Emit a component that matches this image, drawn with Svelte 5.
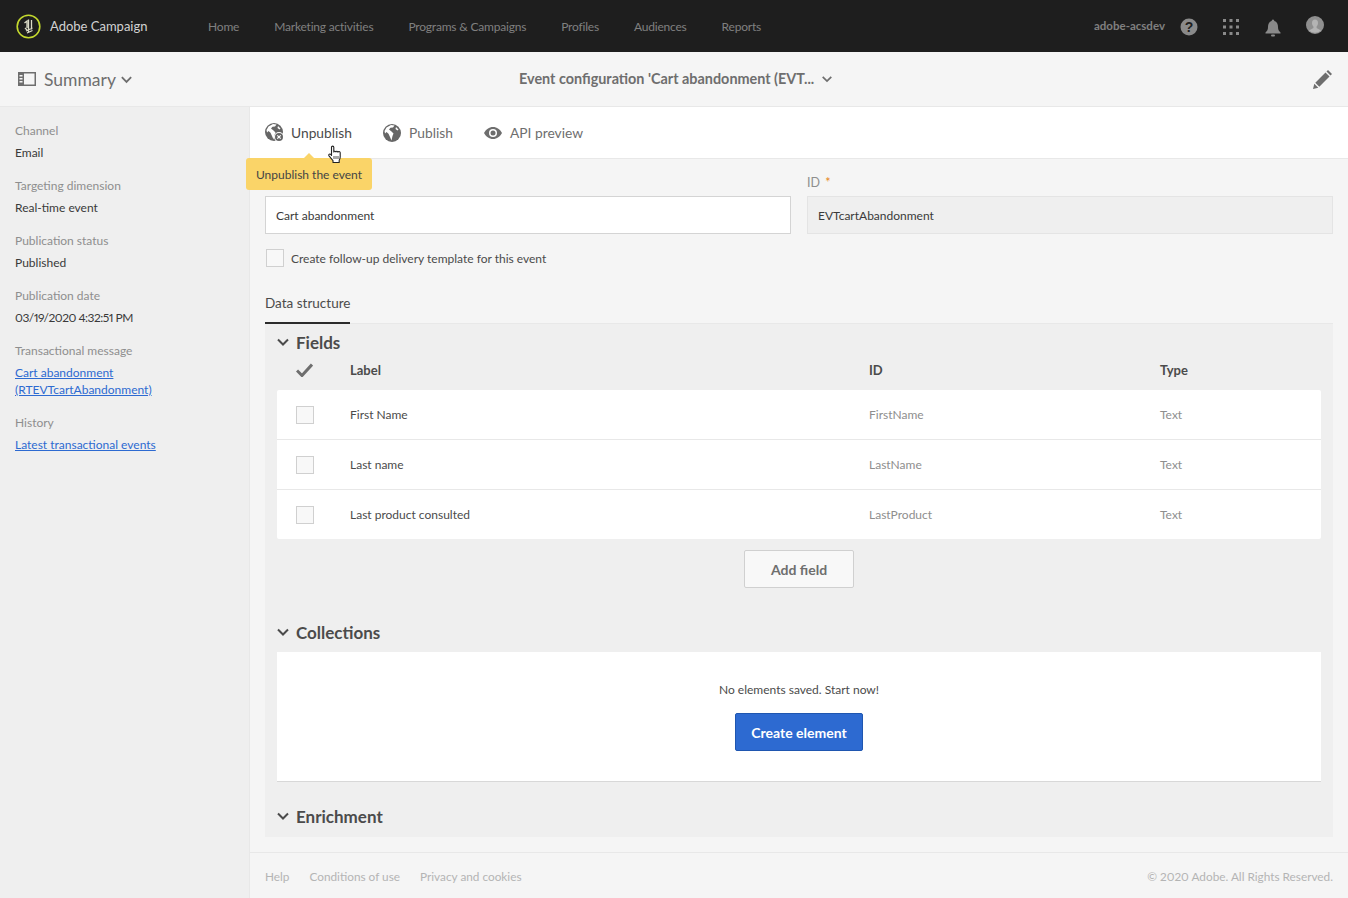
<script>
  const nav = ['Home', 'Marketing activities', 'Programs & Campaigns', 'Profiles', 'Audiences', 'Reports'];
  const meta = [
    { k: 'Channel', v: 'Email' },
    { k: 'Targeting dimension', v: 'Real-time event' },
    { k: 'Publication status', v: 'Published' },
    { k: 'Publication date', v: '03/19/2020 4:32:51 PM', num: true }
  ];
  const rows = [
    ['First Name', 'FirstName', 'Text'],
    ['Last name', 'LastName', 'Text'],
    ['Last product consulted', 'LastProduct', 'Text']
  ];
  const land = 'M8 1 11.500 1.500 10 3.500 7.500 3.800 6 5.500 8.500 7.500 10.500 9.500 9.500 12 8.500 16.500 7 13 5.500 9.800 3.500 8 2 9.500 1.500 7 3.500 3.500zM13 3 15.500 5.500 14.500 6.500 12.500 5z';
</script>

{#snippet chev(size = 14)}
  <svg width={size} height={size} viewBox="0 0 14 14" class="chev"><path d="M2 4.500 7 9.500 12 4.500" fill="none" stroke="currentColor" stroke-width="2"/></svg>
{/snippet}

{#snippet globe()}
  <svg width="18" height="18" viewBox="0 0 18 18"><circle cx="9" cy="9" r="9" fill="#666"/><path d={land} fill="#fff"/></svg>
{/snippet}

<div class="page">
  <header class="top">
    <div class="brand">
      <svg width="25" height="25" viewBox="0 0 25 25"><circle cx="12.500" cy="12.500" r="11.300" fill="none" stroke="#c4d92e" stroke-width="1.600"/><path d="M8.500 9 11 7v7M12.500 5.500v12.500M15.500 6v9.500M10 17l6.500-3M11 19l5.500-2.500M9 14l2 2" fill="none" stroke="#dcdcc8" stroke-width="1.300"/></svg>
      <span>Adobe Campaign</span>
    </div>
    <nav class="nav">
      {#each nav as n}<span>{n}</span>{/each}
    </nav>
    <div class="tools">
      <span class="user">adobe-acsdev</span>
      <svg class="t-help" width="18" height="18" viewBox="0 0 18 18"><circle cx="9" cy="9" r="8.500" fill="#8a8a8a"/><text x="9" y="14" text-anchor="middle" class="q">?</text></svg>
      <svg class="t-grid" width="16" height="16" viewBox="0 0 16 16" fill="#8a8a8a">
        {#each [0, 6.500, 13] as y}{#each [0, 6.500, 13] as x}<rect {x} {y} width="3" height="3"/>{/each}{/each}
      </svg>
      <svg class="t-bell" width="16" height="18" viewBox="0 0 16 18" fill="#8a8a8a"><path d="M8 .5c1 0 1.300.8 1.300 1.500C12 2.800 13 5 13 8c0 2.500.8 4 2.500 5.500v1H.5v-1C2.200 12 3 10.500 3 8c0-3 1-5.200 3.700-6C6.700 1.300 7 .5 8 .5z"/><rect x="6" y="15.500" width="4" height="2" rx="1"/></svg>
      <svg class="t-user" width="18" height="18" viewBox="0 0 18 18"><circle cx="9" cy="9" r="9" fill="#8f8f8f"/><path d="M9 3.500c2 0 3 1.500 3 3.500 0 1.500-.6 2.800-1.400 3.500v1.500L15 14.500A8.800 8.800 0 0 1 3 14.500l4.400-2.500V10.500C6.600 9.800 6 8.500 6 7c0-2 1-3.500 3-3.500z" fill="#b4b4b4"/></svg>
    </div>
  </header>

  <div class="sub">
    <div class="sum">
      <svg width="18" height="14" viewBox="0 0 18 14"><rect x=".75" y=".75" width="16.500" height="12.500" fill="none" stroke="#6e6e6e" stroke-width="1.500"/><rect y="0" width="6" height="14" fill="#6e6e6e"/><rect x="1.500" y="3" width="3" height="1.500" fill="#f5f5f5"/><rect x="1.500" y="6" width="3" height="1.500" fill="#f5f5f5"/><rect x="1.500" y="9" width="3" height="1.500" fill="#f5f5f5"/></svg>
      <span class="sumtxt">Summary</span>
      {@render chev(13)}
    </div>
    <div class="title"><span>Event configuration 'Cart abandonment (EVT...</span>{@render chev(12)}</div>
    <svg class="pencil" width="19" height="19" viewBox="0 0 19 19" fill="#6e6e6e"><path d="M0 19l1.300-5.300L5.300 17.700zM2.300 12.700 12.500 2.500l4 4L6.300 16.700zM13.500 1.500 15 0l4 4-1.500 1.500z"/></svg>
  </div>

  <div class="body">
    <aside class="side">
      {#each meta as m}
        <div class="item"><div class="k">{m.k}</div><div class="v" class:num={m.num}>{m.v}</div></div>
      {/each}
      <div class="item"><div class="k">Transactional message</div><div class="v link">Cart abandonment<br>(RTEVTcartAbandonment)</div></div>
      <div class="item"><div class="k">History</div><div class="v link">Latest transactional events</div></div>
    </aside>

    <main class="main">
      <div class="bar">
        <div class="act first">
          <svg width="19" height="19" viewBox="0 0 19 19"><circle cx="9" cy="9" r="9" fill="#666"/><path d={land} fill="#fff"/><circle cx="14" cy="14" r="5" fill="#fff"/><circle cx="14" cy="14" r="4" fill="#666"/><path d="M12.300 12.300 15.700 15.700M15.700 12.300 12.300 15.700" stroke="#fff" stroke-width="1.200"/></svg>
          <span>Unpublish</span>
        </div>
        <div class="act">{@render globe()}<span class="dim">Publish</span></div>
        <div class="act">
          <svg width="18" height="12" viewBox="0 0 18 12"><path d="M9 0c4 0 7 2.500 9 6-2 3.500-5 6-9 6S2 9.500 0 6c2-3.500 5-6 9-6z" fill="#6e6e6e"/><circle cx="9" cy="6" r="4" fill="#fff"/><circle cx="9" cy="6" r="2.500" fill="#6e6e6e"/></svg>
          <span class="dim">API preview</span>
        </div>
      </div>

      <div class="tip">Unpublish the event</div>
      <svg class="cursor" width="16" height="19" viewBox="0 0 16 19"><path d="M4.500 10.500V2.200c0-1.500 2.300-1.500 2.300 0v4.800c0-1 2-1 2.100 0 0-1 2-1 2.100.2.200-1 2-1 2.200.4v4.400c0 1.500-.5 2.500-1 3.300v2.200H6v-1.800L2 10.800c-1-1.500 1-2.500 2-1.200z" fill="#fff" stroke="#222" stroke-width="1.100" stroke-linejoin="round"/><path d="M7 11v3M9 11v3M11 11v3" stroke="#222" stroke-width=".8"/></svg>

      <div class="content">
        <div class="form">
          <div class="field">
            <div class="flabel" aria-hidden="true">&nbsp;</div>
            <div class="input">Cart abandonment</div>
          </div>
          <div class="field">
            <div class="flabel">ID <em>*</em></div>
            <div class="input ro">EVTcartAbandonment</div>
          </div>
        </div>

        <div class="chk"><span class="box"></span><span>Create follow-up delivery template for this event</span></div>

        <div class="tabs"><span class="tab">Data structure</span></div>

        <section class="panel">
          <h3 class="h first">{@render chev(14)}<span>Fields</span></h3>
          <div class="grid head">
            <span class="c0"><svg width="17" height="14" viewBox="0 0 17 14"><path d="M1 7.500 6 12.500 16 1.500" fill="none" stroke="#6e6e6e" stroke-width="3"/></svg></span>
            <span>Label</span><span>ID</span><span>Type</span>
          </div>
          <div class="table">
            {#each rows as r}
              <div class="grid row">
                <span class="c0"><span class="box"></span></span>
                <span class="lab">{r[0]}</span><span class="mut">{r[1]}</span><span class="mut">{r[2]}</span>
              </div>
            {/each}
          </div>
          <div class="addwrap"><button class="add">Add field</button></div>

          <h3 class="h">{@render chev(14)}<span>Collections</span></h3>
          <div class="empty">
            <p>No elements saved. Start now!</p>
            <button class="cta">Create element</button>
          </div>

          <h3 class="h last">{@render chev(14)}<span>Enrichment</span></h3>
        </section>
      </div>

      <footer class="foot">
        <span>Help</span><span>Conditions of use</span><span>Privacy and cookies</span>
        <span class="copy">© 2020 Adobe. All Rights Reserved.</span>
      </footer>
    </main>
  </div>
</div>

<style>
  :global(body) { margin: 0; background: #f5f5f5; }
  .page { width: 1348px; height: 898px; overflow: hidden; font-family: Lato, "Open Sans", sans-serif; font-size: 13px; color: #4b4b4b; display: flex; flex-direction: column; font-variant-numeric: proportional-nums; }
  .top { height: 52px; flex: none; background: #1e1e1e; display: flex; align-items: center; padding-left: 16px; box-sizing: border-box; }
  .brand { width: 192px; display: flex; align-items: center; gap: 9px; color: #d2d2d2; font-size: 13px; }
  .nav { display: flex; gap: 35px; color: #808080; font-size: 12px; letter-spacing: -.2px; }
  .tools { margin-left: auto; display: flex; align-items: center; position: relative; height: 52px; width: 254px; color: #808080; font-size: 11.500px; font-weight: 700; }
  .user { position: absolute; left: 0; top: 19px; }
  .tools svg { position: absolute; }
  .t-help { left: 86px; top: 18px; }
  .t-grid { left: 129px; top: 19px; }
  .t-bell { left: 171px; top: 19px; }
  .t-user { left: 212px; top: 16px; }
  .q { font: 700 14px "Liberation Sans", sans-serif; fill: #1e1e1e; }

  .sub { height: 55px; flex: none; box-sizing: border-box; border-bottom: 1px solid #e8e8e8; background: #f5f5f5; display: flex; align-items: center; position: relative; padding: 0 16px 0 18px; }
  .sum { display: flex; align-items: center; gap: 8px; color: #6e6e6e; font-size: 17.500px; }
  .sum .chev { margin-left: -4px; }
  .title { position: absolute; left: 519px; top: 18px; display: flex; align-items: center; gap: 7px; color: #6e6e6e; font-size: 14.400px; font-weight: 700; }
  .pencil { margin-left: auto; }

  .body { flex: 1; display: flex; min-height: 0; }
  .side { width: 250px; flex: none; box-sizing: border-box; background: #efefef; border-right: 1px solid #e8e8e8; padding: 15px 15px; display: flex; flex-direction: column; gap: 16px; }
  .k { color: #8e8e8e; font-size: 12px; line-height: 17px; margin-bottom: 5px; }
  .v { color: #3a3a3a; font-size: 12px; line-height: 17px; }
  .num { letter-spacing: -.5px; }
  .link { color: #2d6ad1; text-decoration: underline; }

  .main { flex: 1; position: relative; display: flex; flex-direction: column; min-width: 0; }
  .bar { height: 52px; flex: none; box-sizing: border-box; background: #fff; border-bottom: 1px solid #e8e8e8; display: flex; align-items: center; padding-left: 15px; gap: 31px; font-size: 13.800px; color: #4b4b4b; }
  .act { display: flex; align-items: center; gap: 8px; }
  .act.first { gap: 7px; }
  .dim { color: #6e6e6e; }
  .tip { position: absolute; left: -4px; top: 51px; width: 126px; height: 32px; box-sizing: border-box; background: #fad468; border-radius: 3px; color: #444; font-size: 12px; line-height: 33px; text-align: center; }
  .tip::before { content: ""; position: absolute; left: 57px; top: -5px; border: 6px solid transparent; border-top: 0; border-bottom: 6px solid #fad468; }
  .cursor { position: absolute; left: 77px; top: 38px; z-index: 2; }

  .content { flex: 1; padding: 15px 15px 0; box-sizing: border-box; }
  .form { display: flex; gap: 16px; }
  .field { flex: 1; min-width: 0; }
  .flabel { display: block; height: 18px; line-height: 18px; color: #8e8e8e; font-size: 12.500px; margin-bottom: 4px; }
  .flabel em { color: #e68619; font-style: normal; margin-left: 2px; }
  .input { height: 38px; box-sizing: border-box; border: 1px solid #d4d4d4; background: #fff; padding: 1px 10px 0; line-height: 36px; font-size: 12px; color: #3a3a3a; }
  .input.ro { background: #efefef; border-color: #e4e4e4; }
  .chk { display: flex; align-items: center; gap: 7px; margin: 15px 0 0 1px; font-size: 12px; color: #4b4b4b; }
  .box { display: inline-block; width: 18px; height: 18px; box-sizing: border-box; border: 1px solid #d0d0d0; background: #f8f8f8; }
  .tabs { margin-top: 23px; height: 34px; display: flex; box-sizing: border-box; }
  .tab { font-size: 13.500px; line-height: 26px; height: 34px; box-sizing: border-box; border-bottom: 2px solid #2c2c2c; color: #4b4b4b; position: relative; z-index: 1; }
  .panel { background: #efefef; border-top: 1px solid #e8e8e8; margin-top: -1px; height: 514px; box-sizing: border-box; padding: 0 12px; }
  .h { margin: 0 0 0 -1px; display: flex; align-items: center; gap: 6px; font-size: 17px; font-weight: 700; color: #4b4b4b; height: 22px; }
  .h.first { padding-top: 7px; }
  .h .chev { color: #4b4b4b; }
  .grid { display: grid; grid-template-columns: 73px 519px 291px 1fr; align-items: center; }
  .head { height: 32px; margin: 1px 0 4px; font-weight: 700; color: #4b4b4b; }
  .c0 { display: flex; padding-left: 19px; }
  .table { background: #fff; border-radius: 2px; }
  .row { height: 50px; box-sizing: border-box; border-bottom: 1px solid #e8e8e8; font-size: 12px; }
  .row:last-child { height: 49px; border-bottom: 0; }
  .lab { color: #4b4b4b; }
  .mut { color: #8e8e8e; }
  .addwrap { display: flex; justify-content: center; padding-top: 11px; height: 82px; box-sizing: border-box; }
  button { font-family: inherit; cursor: pointer; }
  .add { width: 110px; height: 38px; background: #f8f8f8; border: 1px solid #d0d0d0; border-radius: 2px; color: #6e6e6e; font-size: 14px; font-weight: 700; }
  .empty { background: #fff; height: 130px; margin-top: 9px; border-bottom: 1px solid #d8d8d8; display: flex; flex-direction: column; align-items: center; box-sizing: border-box; padding-top: 30px; }
  .empty p { margin: 0 0 15px; font-size: 12px; color: #4b4b4b; line-height: 16px; }
  .cta { width: 128px; height: 38px; background: #2d6ad1; border: 1px solid #1f56b0; border-radius: 2px; color: #fff; font-size: 14px; font-weight: 700; }
  .last { margin-top: 23px; }
  .foot { height: 46px; flex: none; border-top: 1px solid #e8e8e8; margin-top: 15px; display: flex; align-items: center; gap: 20px; padding: 0 15px; color: #b4b4b4; font-size: 11.800px; }
  .copy { margin-left: auto; }
</style>
